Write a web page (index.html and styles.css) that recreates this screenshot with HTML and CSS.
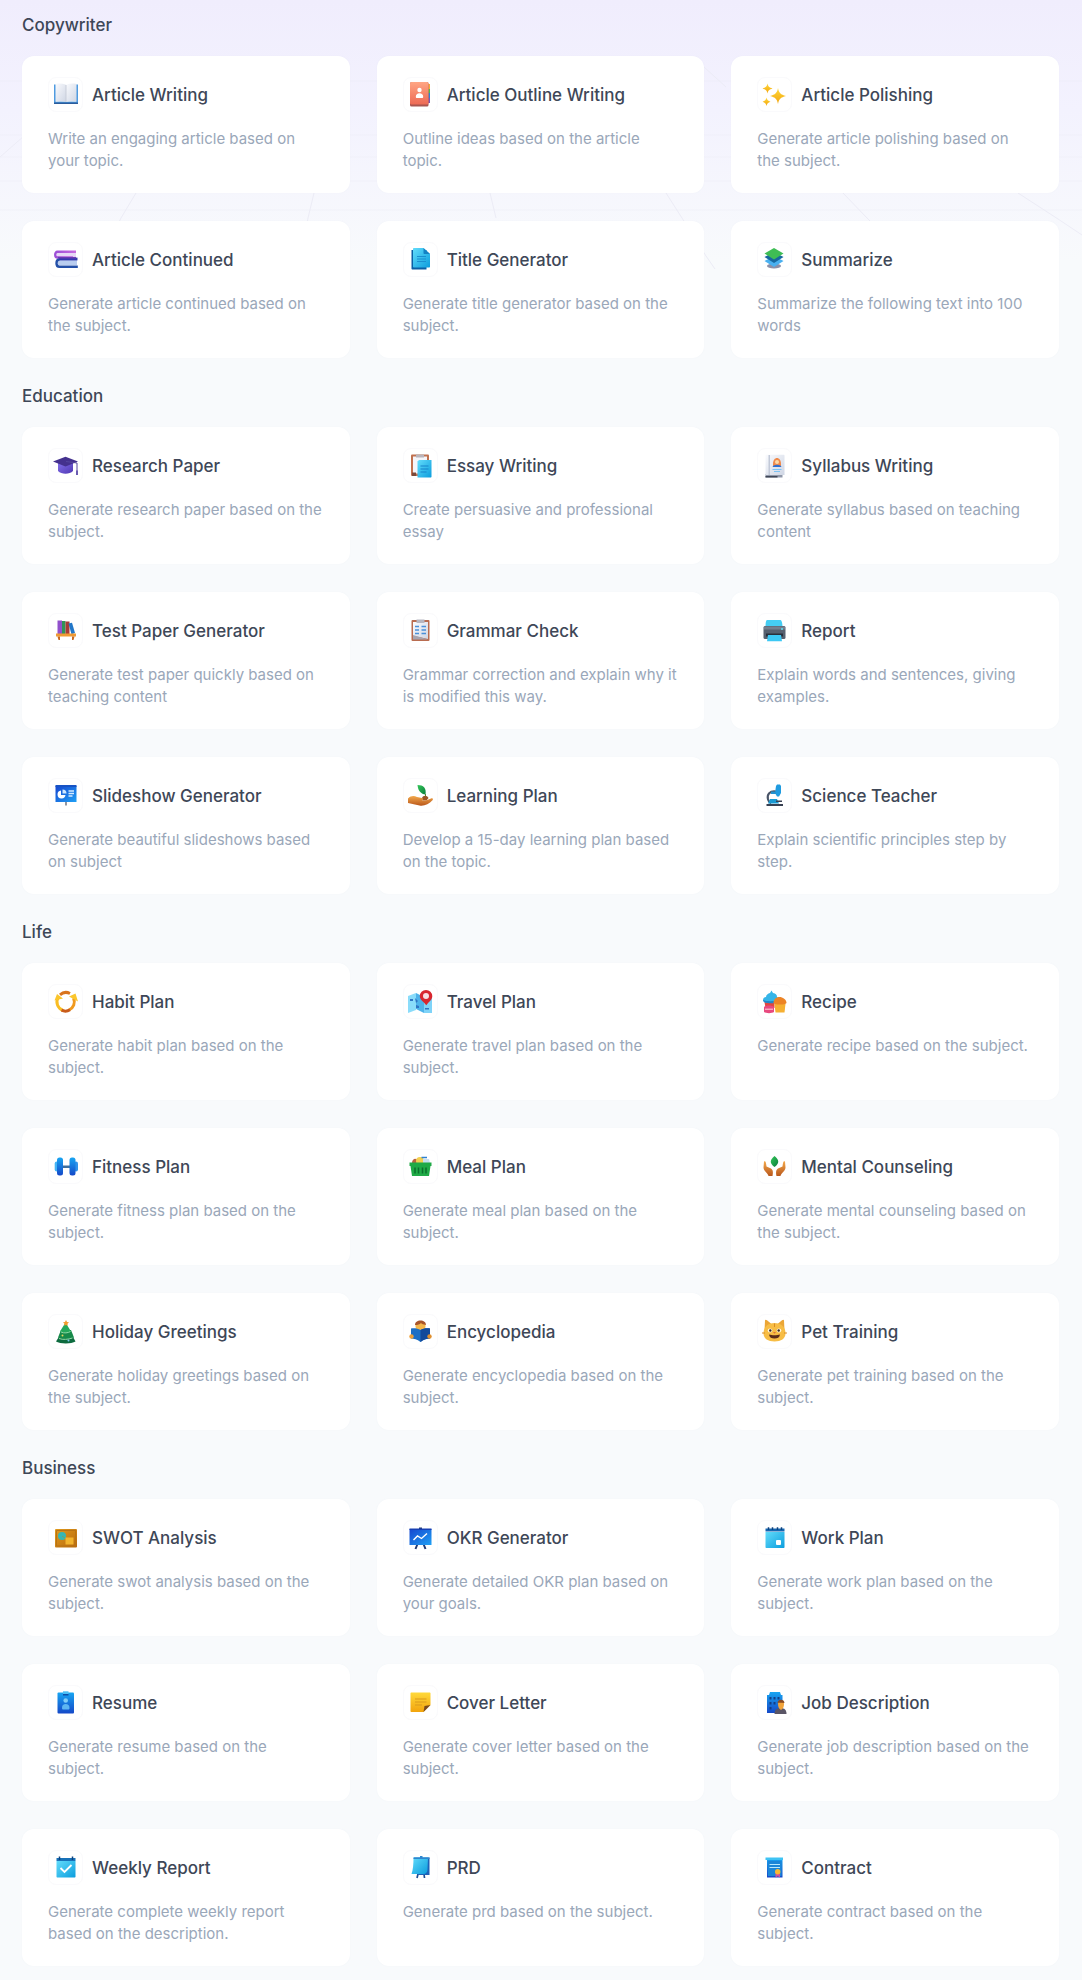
FILE: index.html
```html
<!DOCTYPE html>
<html lang="en">
<head>
  <meta charset="UTF-8">
  <meta name="viewport" content="width=device-width, initial-scale=1.0">
  <title>Templates</title>
  <link rel="stylesheet" href="styles.css">
</head>
<body>
  <!-- Shared icon gradients -->
  <svg class="defs" aria-hidden="true">
    <defs>
      <linearGradient id="cyan" x1="0" y1="0" x2="1" y2="1"><stop offset="0" stop-color="#62dcfb"/><stop offset="1" stop-color="#0c9ddd"/></linearGradient>
      <linearGradient id="blue" x1="0" y1="0" x2="0" y2="1"><stop offset="0" stop-color="#18a5f2"/><stop offset="1" stop-color="#1448c8"/></linearGradient>
      <linearGradient id="royal" x1="0" y1="0" x2="1" y2="1"><stop offset="0" stop-color="#1646cf"/><stop offset="1" stop-color="#1fa0f5"/></linearGradient>
      <linearGradient id="orange" x1="0" y1="0" x2="0" y2="1"><stop offset="0" stop-color="#ffa684"/><stop offset="1" stop-color="#ed6a55"/></linearGradient>
      <linearGradient id="gold" x1="0" y1="0" x2="0" y2="1"><stop offset="0" stop-color="#ffd93b"/><stop offset="1" stop-color="#f2a40c"/></linearGradient>
      <linearGradient id="skin" x1="0" y1="0" x2="0" y2="1"><stop offset="0" stop-color="#f3a94c"/><stop offset="1" stop-color="#b9571b"/></linearGradient>
      <linearGradient id="green" x1="0" y1="0" x2="1" y2="1"><stop offset="0" stop-color="#34c759"/><stop offset="1" stop-color="#0a7d3c"/></linearGradient>
      <linearGradient id="purple" x1="0" y1="0" x2="1" y2="0"><stop offset="0" stop-color="#9c4fd6"/><stop offset="1" stop-color="#c96be0"/></linearGradient>
      <linearGradient id="violet" x1="0" y1="0" x2="1" y2="1"><stop offset="0" stop-color="#8471ea"/><stop offset="1" stop-color="#5038b4"/></linearGradient>
      <linearGradient id="paper" x1="0" y1="0" x2="1" y2="1"><stop offset="0" stop-color="#fafbfe"/><stop offset="1" stop-color="#cfd6e4"/></linearGradient>
      <linearGradient id="wood" x1="0" y1="0" x2="1" y2="1"><stop offset="0" stop-color="#e09a1c"/><stop offset="1" stop-color="#b8690f"/></linearGradient>
    </defs>
  </svg>

  <svg class="backdrop" viewBox="0 0 1082 300" preserveAspectRatio="none" aria-hidden="true">
    <path opacity=".4" d="M0 81h1082M0 135h1082M0 157h1082M0 181h1082M0 210h1082"/>
    <path d="M0 157l32-28M136 193l-15 25-6 12M314 193l-6 25-2 12M490 193l6 25M666 193l16 25 24 38 9 13M843 193l24 25 8 8M704 67l22 20M1018 193l40 26 24 16"/>
  </svg>

  <main class="container">
    <section class="section">
      <h2 class="section-title">Copywriter</h2>
      <div class="grid">
        <a class="card" href="#">
          <div class="card-head">
            <span class="icon-box"><svg class="icon" viewBox="0 0 25 25"><path fill="#4f9be0" d="M1 2.500h2v17h20v-17h2v19.500H1z"/><path fill="#2b5c9c" d="M1 20.500h24V22H1z"/><path fill="url(#paper)" d="M2.500 2c4-.8 7-.5 10.500.8V20c-3.500-1-7-1-10.500-.2z"/><path fill="url(#paper)" d="M23.500 2c-4-.8-7-.5-10.500.8V20c3.500-1 7-1 10.500-.2z"/><path stroke="#c8cdd9" d="M13 3v17"/></svg></span>
            <h3 class="card-title">Article Writing</h3>
          </div>
          <p class="card-text">Write an engaging article based on your topic.</p>
        </a>
        <a class="card" href="#">
          <div class="card-head">
            <span class="icon-box"><svg class="icon" viewBox="0 0 25 25"><path fill="#f5a83a" d="M20 2h2v5h-2z"/><path fill="#54b948" d="M20 7h2v4h-2z"/><path fill="#2f7fd6" d="M20 11h2v5h-2z"/><path fill="#7b54b8" d="M20 16h2v5h-2z"/><rect x="2" y="0" width="18.500" height="24.500" rx="1.500" fill="#a85650"/><rect x="2" y="0" width="18.500" height="22.500" rx="1.500" fill="url(#orange)"/><circle cx="11.500" cy="8" r="2.200" fill="#fff"/><path fill="#fff" d="M7.800 15c0-2.500 1.500-3.700 3.700-3.700s3.700 1.200 3.700 3.700c0 .6-.3.900-.8.900H8.600c-.5 0-.8-.3-.8-.9z"/></svg></span>
            <h3 class="card-title">Article Outline Writing</h3>
          </div>
          <p class="card-text">Outline ideas based on the article topic.</p>
        </a>
        <a class="card" href="#">
          <div class="card-head">
            <span class="icon-box"><svg class="icon" viewBox="0 0 25 25"><g fill="url(#gold)"><path d="M16 6c1 5 2.500 6.500 8 8-5.500 1.500-7 3-8 8-1-5-2.500-6.500-8-8 5.500-1.500 7-3 8-8z"/><path d="M5.500 1.500c.7 3 1.700 4 5 5-3.300 1-4.300 2-5 5-.7-3-1.700-4-5-5 3.300-1 4.300-2 5-5z"/><path d="M4.500 15.500c.5 2.500 1.500 3.500 4 4.200-2.500.8-3.500 1.800-4 4.300-.5-2.500-1.500-3.500-4-4.300 2.500-.7 3.500-1.700 4-4.200z"/></g></svg></span>
            <h3 class="card-title">Article Polishing</h3>
          </div>
          <p class="card-text">Generate article polishing based on the subject.</p>
        </a>
        <a class="card" href="#">
          <div class="card-head">
            <span class="icon-box"><svg class="icon" viewBox="0 0 25 25"><path fill="#e6d8f5" d="M4 6h19v4H4z"/><path fill="none" stroke="url(#purple)" stroke-width="2.400" d="M23 4.800H4.500c-3 0-3 5.700 0 5.700H20"/><path fill="#b9cdf0" d="M5 13h19v5H5z"/><path fill="none" stroke="#3438ad" stroke-width="2.800" d="M24.500 12H6"/><path fill="none" stroke="#2450a8" stroke-width="2.400" d="M6.500 12.500c-4 0-4 7.300 0 7.300h18.300"/><path stroke="#6b3bb4" stroke-width="1.500" d="M5 10.700h18"/></svg></span>
            <h3 class="card-title">Article Continued</h3>
          </div>
          <p class="card-text">Generate article continued based on the subject.</p>
        </a>
        <a class="card" href="#">
          <div class="card-head">
            <span class="icon-box"><svg class="icon" viewBox="0 0 25 25"><path fill="#0b5fa5" d="M3.500 3h15v19.500h-14c-.6 0-1-.4-1-1z"/><path fill="url(#cyan)" d="M6 1h9.500L22 7v12.500c0 .6-.4 1-1 1H6c-.6 0-1-.4-1-1V2c0-.6.400-1 1-1z"/><path fill="#1382c4" d="M15.500 1L22 7h-5.500c-.6 0-1-.4-1-1z"/><path stroke="#1a8fd0" d="M9 9.500h9M9 12h9M9 14.500h9"/></svg></span>
            <h3 class="card-title">Title Generator</h3>
          </div>
          <p class="card-text">Generate title generator based on the subject.</p>
        </a>
        <a class="card" href="#">
          <div class="card-head">
            <span class="icon-box"><svg class="icon" viewBox="0 0 25 25"><ellipse cx="12" cy="19" rx="7" ry="2.600" fill="#8a8fa8"/><path fill="#49b0f0" d="M2.500 14l9.500-5 9.500 5-9.500 6z"/><path fill="#17689f" d="M2.500 10l9.500-5 9.500 5-9.500 6z"/><path fill="#3fbd55" d="M2.500 6.500L12 1l9.500 5.500L12 12.500z"/></svg></span>
            <h3 class="card-title">Summarize</h3>
          </div>
          <p class="card-text">Summarize the following text into 100 words</p>
        </a>
      </div>
    </section>

    <section class="section">
      <h2 class="section-title">Education</h2>
      <div class="grid">
        <a class="card" href="#">
          <div class="card-head">
            <span class="icon-box"><svg class="icon" viewBox="0 0 25 25"><path fill="url(#violet)" d="M5 9h15v9c-3.500 3.500-11.500 3.500-15 0z"/><path fill="#44318e" d="M0 8.500L12.500 3.700 25 8.500 12.500 13.500z"/><path fill="none" stroke="#54459c" d="M13 8.500l11 1.500v8"/><path fill="#6a5bb0" d="M23 17.500h2V22h-2z"/></svg></span>
            <h3 class="card-title">Research Paper</h3>
          </div>
          <p class="card-text">Generate research paper based on the subject.</p>
        </a>
        <a class="card" href="#">
          <div class="card-head">
            <span class="icon-box"><svg class="icon" viewBox="0 0 25 25"><rect x="3" y="1.500" width="18" height="21.500" rx="1" fill="#c0714f"/><path fill="#f4f5fa" d="M5 3.500h14v17H5z"/><path fill="#b9b4bb" d="M8 1.500h8v3H8z"/><path fill="#7a4a3c" d="M4 19.500h4V23H4z"/><path fill="url(#cyan)" d="M11 7h12.500v16.500c0 .6-.4 1-1 1H9.500V8.500z"/><path stroke="#1683cb" d="M12.500 13h8M12.500 16h8M12.500 19h6"/></svg></span>
            <h3 class="card-title">Essay Writing</h3>
          </div>
          <p class="card-text">Create persuasive and professional essay</p>
        </a>
        <a class="card" href="#">
          <div class="card-head">
            <span class="icon-box"><svg class="icon" viewBox="0 0 25 25"><path fill="#8f97a8" d="M3.500 21h17v3.500h-17z"/><path fill="#3f4656" d="M3.500 23h12v1.500h-12z"/><path fill="url(#paper)" d="M4.500 1.700h17c.6 0 1 .4 1 1V22h-19V2.700c0-.6.400-1 1-1z"/><path fill="#c2c9d8" d="M6.500 2h1.500v20H6.500z"/><path fill="#f08a4b" d="M11 11c0-8 8-8 8 0v2h-8z"/><circle cx="15" cy="9" r="2" fill="#fcd9a6"/><path fill="#2f6fd1" d="M10.500 14c1-3 8-3 9 0z"/><path stroke="#7cc3f5" d="M10.500 16.500h9M12 18.500h6"/></svg></span>
            <h3 class="card-title">Syllabus Writing</h3>
          </div>
          <p class="card-text">Generate syllabus based on teaching content</p>
        </a>
        <a class="card" href="#">
          <div class="card-head">
            <span class="icon-box"><svg class="icon" viewBox="0 0 25 25"><path fill="#9150cc" d="M4.500 2.500H9V16H4.500z"/><path fill="#2f9359" d="M9 3h3.500v13H9z"/><path fill="#a63a38" d="M12.500 3.500h4V16h-4z"/><path fill="#2277c9" d="M15.500 5.500l3.500-.8L22 15l-3.500 1.300z"/><path fill="#ef9a33" d="M3 15.500h20v3H3z"/><path fill="#c8681d" d="M4.500 18.500H7V22H5.500zM19 18.500h2.500L20.500 22H19z"/></svg></span>
            <h3 class="card-title">Test Paper Generator</h3>
          </div>
          <p class="card-text">Generate test paper quickly based on teaching content</p>
        </a>
        <a class="card" href="#">
          <div class="card-head">
            <span class="icon-box"><svg class="icon" viewBox="0 0 25 25"><rect x="3.500" y="2" width="18" height="21" rx="1" fill="#b96c50"/><path fill="url(#paper)" d="M5 4h15v17l-9-2-6-1z"/><path fill="#b7b6c0" d="M8.500 1.500h8V5h-8z"/><path fill="#a6a4b0" d="M5 17l15 4.500H5z"/><path stroke="#4a90d9" stroke-width="1.500" d="M7 8.500h4M7 12h4M7 15.500h4M13.500 8.500h4.500M13.500 12h4.500M13.500 15.500h4.500"/></svg></span>
            <h3 class="card-title">Grammar Check</h3>
          </div>
          <p class="card-text">Grammar correction and explain why it is modified this way.</p>
        </a>
        <a class="card" href="#">
          <div class="card-head">
            <span class="icon-box"><svg class="icon" viewBox="0 0 25 25"><path fill="#45cdf3" d="M5 2h13.500c1 0 2 3 2 7h-17c0-4 .5-7 1.500-7z"/><rect x="1.500" y="8" width="22" height="13" rx="1.500" fill="#56606f"/><path fill="#747f8e" d="M2 8.500h21v3H2z"/><path fill="#28303c" d="M4 15.500h17v3H4z"/><circle cx="20" cy="11" r="1" fill="#5fe0f5"/><path fill="#3cc8f4" d="M6 17h13l1 6.300H5z"/></svg></span>
            <h3 class="card-title">Report</h3>
          </div>
          <p class="card-text">Explain words and sentences, giving examples.</p>
        </a>
        <a class="card" href="#">
          <div class="card-head">
            <span class="icon-box"><svg class="icon" viewBox="0 0 25 25"><path stroke="#6c7280" stroke-width="1.500" d="M13 18v4.500"/><path fill="url(#royal)" d="M2.500 3h21v16h-21z"/><path fill="#1753c4" d="M2.500 2h21v2h-21z"/><path fill="#fff" d="M8 7.500v4.500h4.500A4 4 0 1 1 8 7.500z"/><path fill="#cfe9ff" d="M9.500 6.500a4 4 0 0 1 4 4h-4z"/><path stroke="#d5ecff" stroke-width="1.500" d="M15.500 8h5.500M15.500 10.500h5.500M15.500 13h4"/></svg></span>
            <h3 class="card-title">Slideshow Generator</h3>
          </div>
          <p class="card-text">Generate beautiful slideshows based on subject</p>
        </a>
        <a class="card" href="#">
          <div class="card-head">
            <span class="icon-box"><svg class="icon" viewBox="0 0 25 25"><path fill="url(#green)" d="M9.500 2c6 0 9 3 8 9.500-4.500-.5-7.500-3.500-8-9.500z"/><path fill="none" stroke="#4f8a2f" d="M17.500 11v4"/><path fill="#9a5424" d="M14 15c1-3 5-3 6.500 0l-2 2.500h-4z"/><path fill="url(#skin)" d="M0 15.500c3-3 6-3 9-1.500l5 1c1.500.3 1.500 2 0 2.500 3 .3 6-.5 9-2 1.500-.5 2.500.5 1.500 1.800-3.500 4-9 6.200-13 5.200L0 20z"/></svg></span>
            <h3 class="card-title">Learning Plan</h3>
          </div>
          <p class="card-text">Develop a 15-day learning plan based on the topic.</p>
        </a>
        <a class="card" href="#">
          <div class="card-head">
            <span class="icon-box"><svg class="icon" viewBox="0 0 25 25"><path fill="none" stroke="#4a5568" stroke-width="2" d="M14 8.500c-6-1-9.500 3-8 8 .5 2 1.500 3 3 4"/><path fill="#1f9be0" d="M14 3l1-1.500h3L19 3v7l-2 3.500h-2L13 10z"/><path fill="#2492cf" d="M9 8.500h5V11H9z"/><path fill="#1a9ad3" d="M8 16h7l2 4.500H6z"/><path fill="#384152" d="M4.500 21H21v2H4.500zM14 17.500h6V19h-6z"/></svg></span>
            <h3 class="card-title">Science Teacher</h3>
          </div>
          <p class="card-text">Explain scientific principles step by step.</p>
        </a>
      </div>
    </section>

    <section class="section">
      <h2 class="section-title">Life</h2>
      <div class="grid">
        <a class="card" href="#">
          <div class="card-head">
            <span class="icon-box"><svg class="icon" viewBox="0 0 25 25"><path fill="none" stroke="#f9bd22" stroke-width="3" d="M10 21.500A9 9 0 0 1 5.500 8"/><path fill="none" stroke="#d9731b" stroke-width="3" d="M7 5.800a9 9 0 0 1 10-1.300"/><path fill="none" stroke="#f09a1e" stroke-width="3" d="M20.500 9a9 9 0 0 1-4.500 12"/><path fill="none" stroke="#c95c1b" stroke-width="3" d="M17 20.800a9 9 0 0 1-8.500.4"/><path fill="#fbc62c" d="M1.500 11.500L4 5l6 4.500zM16 7.500l6.500-3 2.500 8z"/></svg></span>
            <h3 class="card-title">Habit Plan</h3>
          </div>
          <p class="card-text">Generate habit plan based on the subject.</p>
        </a>
        <a class="card" href="#">
          <div class="card-head">
            <span class="icon-box"><svg class="icon" viewBox="0 0 25 25"><path fill="#8adcfa" d="M0 7l8-3v17l-8 3z"/><path fill="#4db2ea" d="M8 4l8 4v16l-8-4z"/><path fill="#7fd3f8" d="M16 8l8-2v18h-8z"/><path fill="#2f74c4" d="M2 10h3v2H2zM7 9l3 3-2 2zM8 16l3 1v2H8zM17 19h4v1.500h-4z"/><path fill="#d8262f" d="M18 1a6.300 6.300 0 0 1 6.300 6.300c0 3.700-4 6-6 9-2-3-6.500-5.300-6.500-9A6.200 6.200 0 0 1 18 1z"/><circle cx="18" cy="7" r="3" fill="#f7dfe4"/></svg></span>
            <h3 class="card-title">Travel Plan</h3>
          </div>
          <p class="card-text">Generate travel plan based on the subject.</p>
        </a>
        <a class="card" href="#">
          <div class="card-head">
            <span class="icon-box"><svg class="icon" viewBox="0 0 25 25"><path fill="#e2463f" d="M2.500 13h10v6h-9z"/><path fill="#35b5e8" d="M1 11c0-2 1.500-3 3-3 0-2 2-3.500 4-4l1.500-2.400L11 4c3 .5 4 2 4 4 1.500.3 2.500 1.500 2 3-.5 2-2.500 3-8 3s-8-1-8-3z"/><path fill="#2287c9" d="M1 11c3 1.600 11 1.600 16 0 0 2-2.500 3.300-8 3.300S1 13 1 11z"/><path fill="#e8497f" d="M2 18c2-2 8-2 10 0v5c-2 1.500-8 1.500-10 0z"/><path fill="#f9a7bd" d="M3 19.500h8V21H3z"/><path fill="#f6b032" d="M12.500 15h11l-1 8.500h-9z"/><path fill="#ec8426" d="M11.500 14c0-4 3-6 6-6s7 2.500 7 6c-1 2-12 2-13 0z"/></svg></span>
            <h3 class="card-title">Recipe</h3>
          </div>
          <p class="card-text">Generate recipe based on the subject.</p>
        </a>
        <a class="card" href="#">
          <div class="card-head">
            <span class="icon-box"><svg class="icon" viewBox="0 0 25 25"><path fill="#3e6f9e" d="M8 11.500h10v2.500H8z"/><rect x="1.700" y="7.500" width="4" height="10" rx="2" fill="#44b4f5"/><rect x="21" y="7.500" width="4" height="10" rx="2" fill="#3093ea"/><rect x="4" y="3.500" width="6" height="18" rx="2.500" fill="url(#blue)"/><rect x="16.500" y="3.500" width="6" height="18" rx="2.500" fill="url(#blue)"/></svg></span>
            <h3 class="card-title">Fitness Plan</h3>
          </div>
          <p class="card-text">Generate fitness plan based on the subject.</p>
        </a>
        <a class="card" href="#">
          <div class="card-head">
            <span class="icon-box"><svg class="icon" viewBox="0 0 25 25"><path fill="#b8623f" d="M4 9c0-4 4-6 6-2v3H4z"/><circle cx="12" cy="7" r="4" fill="#f3cf4f"/><path fill="#c9dff0" d="M15 5h6l1 4h-7z"/><path stroke="#2f80d0" stroke-width="1.500" d="M13.500 3.500H19"/><path fill="#1faa46" d="M1.500 8.500h22v3.500h-1l-1.500 10h-17L2.500 12h-1z"/><path stroke="#0b6f2c" stroke-width="1.500" d="M7 13.500v6M10.500 13.500v6M14.500 13.500v6M18 13.500v6"/></svg></span>
            <h3 class="card-title">Meal Plan</h3>
          </div>
          <p class="card-text">Generate meal plan based on the subject.</p>
        </a>
        <a class="card" href="#">
          <div class="card-head">
            <span class="icon-box"><svg class="icon" viewBox="0 0 25 25"><path fill="url(#green)" d="M12.500 2c5 4 5 7.500 0 11-5-3.500-5-7 0-11z"/><path fill="url(#skin)" d="M2 7.500c1.500-1 2 .5 2.500 5L9 14.500c2.500 1.500 2 5 1.500 7.500H6.500c-.5-3-5-5-5-8.500z"/><path fill="url(#skin)" d="M23 7.500c-1.500-1-2 .5-2.500 5L16 14.500c-2.500 1.500-2 5-1.500 7.500h4c.5-3 5-5 5-8.500z"/></svg></span>
            <h3 class="card-title">Mental Counseling</h3>
          </div>
          <p class="card-text">Generate mental counseling based on the subject.</p>
        </a>
        <a class="card" href="#">
          <div class="card-head">
            <span class="icon-box"><svg class="icon" viewBox="0 0 25 25"><path fill="#0d6b3f" d="M6.500 17h13l3 5.500c-4 2.500-15.500 2.500-19.500 0z"/><path fill="#178a4a" d="M8 11h10l3 7.500c-4 2-12 2-16 0z"/><path fill="#25a85a" d="M12.500 3.500l5.500 9c-3 1.600-8 1.600-11 0z"/><path fill="none" stroke="#8fd8a4" d="M8 13c3 1.500 7 1 9.500-.5M6 19.500c4 1.500 9 1 13.500-.5"/><path fill="#f49b2c" d="M13 1l1 2 2 .3-1.500 1.500.3 2L13 6l-1.800.8.3-2L10 3.300l2-.3z"/><circle cx="9.500" cy="16.500" r="1" fill="#e6d45c"/><circle cx="15.500" cy="21.500" r="1" fill="#7cc6f0"/></svg></span>
            <h3 class="card-title">Holiday Greetings</h3>
          </div>
          <p class="card-text">Generate holiday greetings based on the subject.</p>
        </a>
        <a class="card" href="#">
          <div class="card-head">
            <span class="icon-box"><svg class="icon" viewBox="0 0 25 25"><path fill="#f4b64a" d="M7.500 7c0-3 2-5 5-5s5 2 5 5-2 5-5 5-5-2-5-5z"/><path fill="#a9552a" d="M7 6c0-3 2.500-4.500 5.500-4.500S18 3 18 6c-3-.5-4-1-5-2-1.500 1.500-3 2-6 2z"/><path fill="#1e6fc4" d="M3 9.500c3.500-.5 7 0 9.500 1.500C15 9.500 18.500 9 22 9.500v10c-3 0-6 .5-9.500 3.500C9 20 6 19.500 3 19.500z"/><path fill="#12499a" d="M12.500 11C15 9.500 18.500 9 22 9.500v10c-3 0-6 .5-9.500 3.500z"/><circle cx="3.500" cy="17.500" r="2.200" fill="#f0a23c"/><circle cx="21.500" cy="17.500" r="2.200" fill="#e08f2e"/></svg></span>
            <h3 class="card-title">Encyclopedia</h3>
          </div>
          <p class="card-text">Generate encyclopedia based on the subject.</p>
        </a>
        <a class="card" href="#">
          <div class="card-head">
            <span class="icon-box"><svg class="icon" viewBox="0 0 25 25"><path fill="#eba636" d="M2.500 12L3 1.500C3 .5 4 .5 5 1.200L9.500 5h6L20 1.200c1-.7 2-.7 2 .3L22.500 12z"/><path fill="#f7bd45" d="M12.500 4c6.500 0 11 4 11 10.500 0 5-4.500 8-11 8s-11-3-11-8C1.500 8 6 4 12.500 4z"/><ellipse cx="8" cy="11.500" rx="2.300" ry="2" fill="#fff4da"/><ellipse cx="17" cy="11.500" rx="2.300" ry="2" fill="#fff4da"/><circle cx="8.300" cy="11.500" r="1.200" fill="#3d2a1e"/><circle cx="16.700" cy="11.500" r="1.200" fill="#3d2a1e"/><path fill="#5b2c1a" d="M7 15.500c3 1 8 1 11 0-.5 3-2.500 4-5.500 4S7.500 18.500 7 15.500z"/><path fill="#d9713a" d="M11 13h3l-1.500 1.800z"/><path stroke="#d98a25" d="M0 14h3M22 14h3M12.500 4.500V8"/></svg></span>
            <h3 class="card-title">Pet Training</h3>
          </div>
          <p class="card-text">Generate pet training based on the subject.</p>
        </a>
      </div>
    </section>

    <section class="section">
      <h2 class="section-title">Business</h2>
      <div class="grid">
        <a class="card" href="#">
          <div class="card-head">
            <span class="icon-box"><svg class="icon" viewBox="0 0 25 25"><rect x="2" y="4" width="22" height="18.500" rx="1" fill="url(#wood)"/><path fill="none" stroke="#b87314" d="M3.500 5.500h19V21h-19z"/><circle cx="9" cy="11" r="4" fill="#36b6b4"/><path stroke="#7ca05c" d="M9 11l6 4"/><path fill="#f2b42e" d="M12.500 12.500h8v7h-8z"/></svg></span>
            <h3 class="card-title">SWOT Analysis</h3>
          </div>
          <p class="card-text">Generate swot analysis based on the subject.</p>
        </a>
        <a class="card" href="#">
          <div class="card-head">
            <span class="icon-box"><svg class="icon" viewBox="0 0 25 25"><path stroke="#243b73" stroke-width="2" d="M9.500 19l-2 5M15.500 19l2 5"/><path fill="#243b73" d="M11 2.500h3v2h-3z"/><path fill="url(#royal)" d="M1.500 4h22v16h-22z"/><path fill="#173fb3" d="M1.500 3.500h22V5h-22z"/><path fill="none" stroke="#fff" stroke-width="1.400" d="M5.500 15l4-4 4 2.500L19 8.500"/></svg></span>
            <h3 class="card-title">OKR Generator</h3>
          </div>
          <p class="card-text">Generate detailed OKR plan based on your goals.</p>
        </a>
        <a class="card" href="#">
          <div class="card-head">
            <span class="icon-box"><svg class="icon" viewBox="0 0 25 25"><path fill="url(#cyan)" d="M3.500 7h19v15c0 .6-.4 1-1 1h-17c-.6 0-1-.4-1-1z"/><path fill="#1465b0" d="M3.500 3.500h19v3h-19z"/><path stroke="#0c4380" stroke-width="1.500" d="M6.500 2.300V5M10.500 2.300V5M15.500 2.300V5M19.500 2.300V5"/><rect x="14" y="15" width="5" height="5" rx="1" fill="#fff"/></svg></span>
            <h3 class="card-title">Work Plan</h3>
          </div>
          <p class="card-text">Generate work plan based on the subject.</p>
        </a>
        <a class="card" href="#">
          <div class="card-head">
            <span class="icon-box"><svg class="icon" viewBox="0 0 25 25"><rect x="4.500" y="2.500" width="16.500" height="21" rx="1" fill="url(#blue)"/><path fill="#4bbff5" d="M10 1.300h5.500V4H10z"/><path fill="#0d4da8" d="M10 4h5.500v1.500H10z"/><circle cx="12.700" cy="10.500" r="2.300" fill="#7fcdf8"/><path fill="#5db6f2" d="M9 18c0-3 1.500-4 3.700-4s3.800 1 3.800 4c0 1-.5 1.500-1.500 1.500h-4.500C9.500 19.500 9 19 9 18z"/></svg></span>
            <h3 class="card-title">Resume</h3>
          </div>
          <p class="card-text">Generate resume based on the subject.</p>
        </a>
        <a class="card" href="#">
          <div class="card-head">
            <span class="icon-box"><svg class="icon" viewBox="0 0 25 25"><path fill="url(#gold)" d="M3.500 2.500h18c.6 0 1 .4 1 1V15l-7 7h-12c-.6 0-1-.4-1-1V3.500c0-.6.400-1 1-1z"/><path fill="#7a4a1f" d="M15.500 22l1-6 6-1z"/><path stroke="#d99a1d" stroke-width="1.200" d="M7 9h11.500M7 12h11.500M7 15h7"/></svg></span>
            <h3 class="card-title">Cover Letter</h3>
          </div>
          <p class="card-text">Generate cover letter based on the subject.</p>
        </a>
        <a class="card" href="#">
          <div class="card-head">
            <span class="icon-box"><svg class="icon" viewBox="0 0 25 25"><path fill="url(#blue)" d="M5 5h2l1-3h10l1 3h1.500v18H5z"/><g fill="#123f86"><path d="M7.500 7h2v2.500h-2zM11.500 7h2v2.500h-2zM15.500 7h2v2.500h-2zM7.500 12h2v2.500h-2zM11.500 12h2v2.500h-2zM7.500 17h2v2.500h-2z"/></g><path fill="#5a5566" d="M12.500 24c0-4 2-6 6-6s6 2 6 6z"/><path fill="#f2a43a" d="M16 14c0-5 6-5 6 0 0 3-1 5-3 6-2-1-3-3-3-6z"/><path fill="#8a4a22" d="M15.500 13c0-4.500 7-4.500 7 0-3-.2-5-.6-7 0z"/></svg></span>
            <h3 class="card-title">Job Description</h3>
          </div>
          <p class="card-text">Generate job description based on the subject.</p>
        </a>
        <a class="card" href="#">
          <div class="card-head">
            <span class="icon-box"><svg class="icon" viewBox="0 0 25 25"><path fill="url(#cyan)" d="M3.500 6h19v15.500c0 .6-.4 1-1 1h-17c-.6 0-1-.4-1-1z"/><path fill="#1771b8" d="M3.500 3h19v3h-19z"/><path stroke="#0c4380" stroke-width="1.500" d="M6.500 1.600V5M19.500 1.600V5"/><path fill="none" stroke="#fff" stroke-width="1.800" d="M7.500 13l4 4 7-7"/></svg></span>
            <h3 class="card-title">Weekly Report</h3>
          </div>
          <p class="card-text">Generate complete weekly report based on the description.</p>
        </a>
        <a class="card" href="#">
          <div class="card-head">
            <span class="icon-box"><svg class="icon" viewBox="0 0 25 25"><path stroke="#1f4f95" stroke-width="1.700" d="M10 19l-1 4M16 19l.5 4"/><path fill="#1d63b8" d="M6 2.500h15.500v17.500H10z"/><path fill="url(#cyan)" d="M5.500 2.500h14.500l-.5 12c0 2-1 4-3 4.500H3.500c1.500-4 2-10 2-16.500z"/><path fill="#2f86cf" d="M5.500 2.500h16V4h-16zM12 1h2.500v2H12z"/></svg></span>
            <h3 class="card-title">PRD</h3>
          </div>
          <p class="card-text">Generate prd based on the subject.</p>
        </a>
        <a class="card" href="#">
          <div class="card-head">
            <span class="icon-box"><svg class="icon" viewBox="0 0 25 25"><path fill="url(#blue)" d="M5 3h15.500v19.500H5z"/><path fill="#3ec3f4" d="M3.500 2.500h17.500V5H3.500z"/><path fill="#1b86d8" d="M6 6h13.500v15H6z"/><path stroke="#b8eaff" d="M7.500 9.500h10.500M7.500 12.500h10.500"/><path fill="#cf4fa0" d="M13.500 18h4.500v4.500l-2.200-1.200-2.300 1.200z"/><circle cx="15.700" cy="16.700" r="2.700" fill="#f8b934"/></svg></span>
            <h3 class="card-title">Contract</h3>
          </div>
          <p class="card-text">Generate contract based on the subject.</p>
        </a>
      </div>
    </section>
  </main>
</body>
</html>
```
FILE: styles.css
```css
* {
  margin: 0;
  padding: 0;
  box-sizing: border-box;
}

:root {
  --page: #f8fafc;
  --glow: #f0edfd;
  --text: #3e4757;
  --muted: #9aa7b9;
  --line: #ececf6;
}

body {
  position: relative;
  background: linear-gradient(to bottom, var(--glow), #f3f2fe 110px, var(--page) 260px) no-repeat var(--page);
  color: var(--text);
  font-family: Inter, 'Liberation Sans', sans-serif;
}

.defs {
  position: absolute;
  width: 0;
  height: 0;
}

/* faint perspective lines behind the first rows */
.backdrop {
  position: absolute;
  top: 0;
  left: 0;
  z-index: -1;
  width: 100%;
  height: 300px;
  fill: none;
  stroke: var(--line);
}

.container {
  padding: 13px 23px 14px 22px;
}

.section + .section {
  margin-top: 26px;
}

.section-title {
  margin-bottom: 19px;
  font-size: 17px;
  font-weight: 500;
  line-height: 24px;
}

.grid {
  display: grid;
  grid-template-columns: repeat(3, 1fr);
  gap: 28px 27px;
}

.card {
  display: block;
  padding: 21px 26px;
  background: #fff;
  border-radius: 12px;
  box-shadow: 0 0 2px rgba(148, 163, 184, 0.06);
  color: inherit;
  text-decoration: none;
}

.card-head {
  display: flex;
  align-items: center;
  gap: 9px;
  margin-bottom: 16px;
}

.icon-box {
  display: flex;
  align-items: center;
  justify-content: center;
  width: 35px;
  height: 35px;
  border: 1px solid #fafafc;
  border-radius: 8px;
}

.icon {
  width: 25px;
  height: 25px;
  fill: none;
}

.card-title {
  font-size: 17px;
  font-weight: 500;
  line-height: 24px;
}

.card-text {
  color: var(--muted);
  font-size: 15px;
  line-height: 22px;
}
```
